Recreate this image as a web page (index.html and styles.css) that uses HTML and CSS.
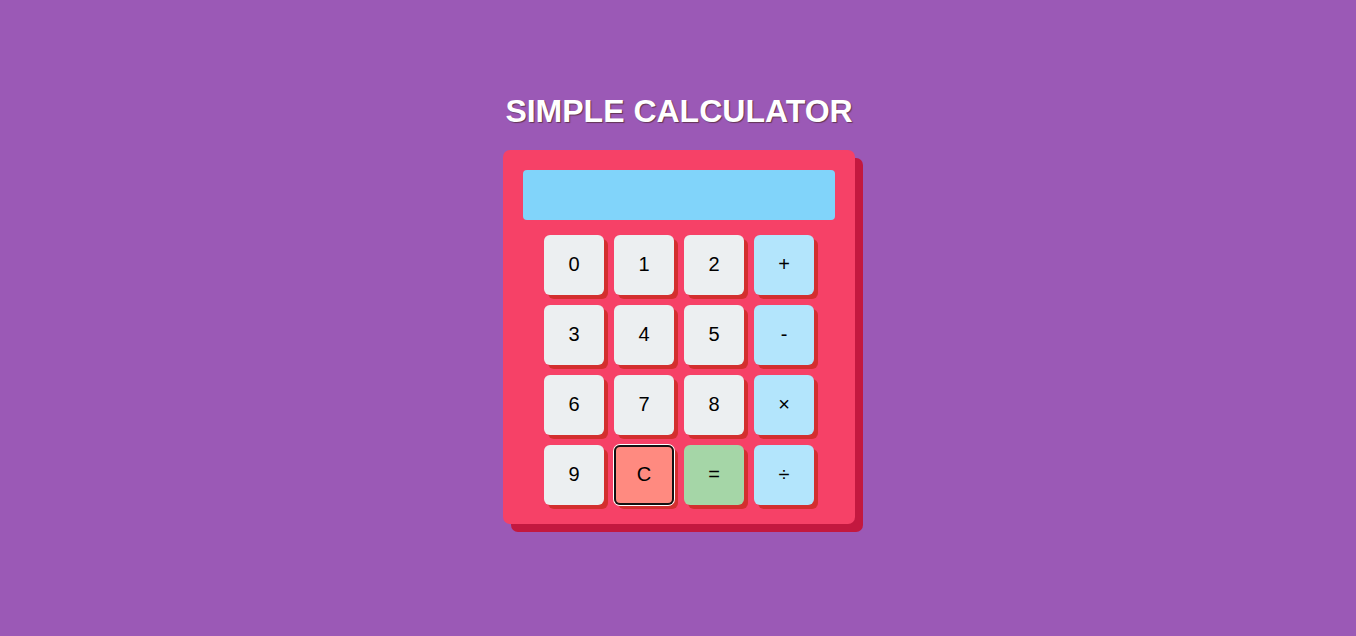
FILE: index.html
```html
<!DOCTYPE html>
<html lang="en">
<head>
<meta charset="utf-8">
<title>Simple Calculator</title>
<link rel="stylesheet" href="styles.css">
</head>
<body>
<main class="page">
  <h1 class="title">SIMPLE CALCULATOR</h1>
  <div class="calculator">
    <div class="display"></div>
    <div class="keys">
      <button class="key">0</button>
      <button class="key">1</button>
      <button class="key">2</button>
      <button class="key key-op">+</button>
      <button class="key">3</button>
      <button class="key">4</button>
      <button class="key">5</button>
      <button class="key key-op">-</button>
      <button class="key">6</button>
      <button class="key">7</button>
      <button class="key">8</button>
      <button class="key key-op">×</button>
      <button class="key">9</button>
      <button class="key key-clear key-focus">C</button>
      <button class="key key-equal">=</button>
      <button class="key key-op">÷</button>
    </div>
  </div>
</main>
</body>
</html>
```
FILE: styles.css
```css
* { box-sizing: border-box; }
html, body {
  margin: 0;
  height: 100%;
}
body {
  background: #9b59b6;
  font-family: "Liberation Sans", Arial, sans-serif;
}
.page {
  display: flex;
  flex-direction: column;
  align-items: center;
  padding-top: 93px;
  padding-left: 2px;
}
.title {
  margin: 0 0 20px;
  font-size: 32px;
  line-height: 37px;
  font-weight: bold;
  color: #ffffff;
  text-shadow: 1px 1px 1px rgba(60, 30, 20, 0.6);
}
.calculator {
  width: 352px;
  padding: 20px 20px 19px;
  background: #f64167;
  border-radius: 7px;
  box-shadow: 8px 8px 0 #c3183f;
}
.display {
  height: 50px;
  background: #81d4fa;
  border-radius: 4px;
  margin-bottom: 15px;
}
.keys {
  display: grid;
  grid-template-columns: repeat(4, 60px);
  gap: 10px;
  justify-content: center;
}
.key {
  width: 60px;
  height: 60px;
  border: none;
  border-radius: 6px;
  background: #eceff1;
  color: #000;
  font-family: "Liberation Sans", Arial, sans-serif;
  font-size: 20px;
  line-height: 1;
  padding: 0 0 2px;
  box-shadow: 4px 4px 0 #d32f2f;
}
.key-op { background: #b3e5fc; }
.key-clear { background: #ff8a80; }
.key-equal { background: #a5d6a7; }
.key-focus {
  box-shadow: 0 0 0 1px #ffffff, inset 0 0 0 2px #111111, 4px 4px 0 #d32f2f;
}
```
